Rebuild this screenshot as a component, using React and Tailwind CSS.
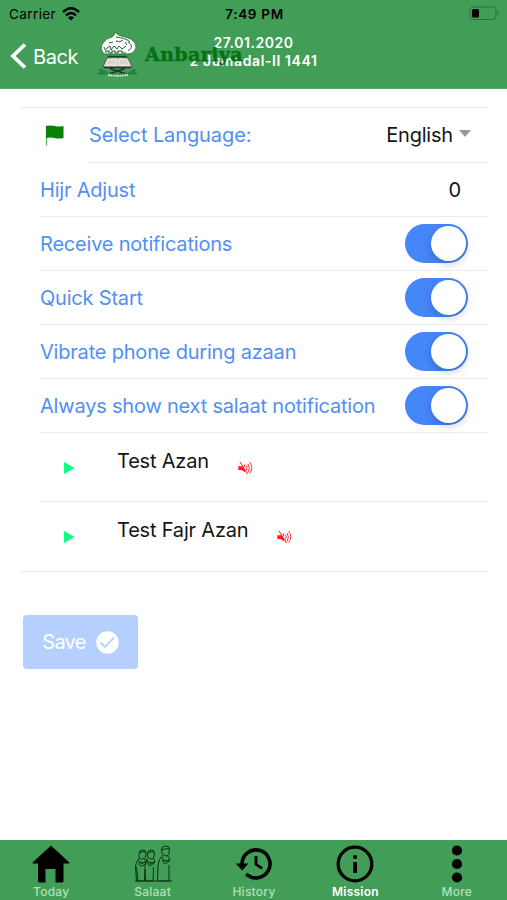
import React, { useState } from 'react';

const TABS = [
  { id: 'today', label: 'Today', icon: HomeIcon },
  { id: 'salaat', label: 'Salaat', icon: SalaatIcon },
  { id: 'history', label: 'History', icon: HistoryIcon },
  { id: 'mission', label: 'Mission', icon: InfoIcon },
  { id: 'more', label: 'More', icon: MoreIcon },
];

const SWITCHES = [
  { id: 'notifications', label: 'Receive notifications' },
  { id: 'quickStart', label: 'Quick Start' },
  { id: 'vibrate', label: 'Vibrate phone during azaan' },
  { id: 'nextSalaat', label: 'Always show next salaat notification' },
];

function HomeIcon() {
  return (
    <svg width="38" height="38" viewBox="0 0 38 38">
      <path d="M19 0.5 0.8 17.2q-.8 1.3.6 1.3H6V36q0 1.5 1.5 1.5h6V24h10v13.5h6.500q1.500 0 1.500-1.500V18.500h5q1.400 0 .6-1.300Z" />
    </svg>
  );
}

function SalaatIcon() {
  return (
    <svg width="38" height="38" viewBox="0 0 38 38" fill="none" stroke="#0b3315" strokeWidth="1">
      <path d="M1 36h37" />
      {/* two worshippers side by side */}
      <path d="M5 9q0-4 3.500-4t3.500 3l-.5 4q-1 2-3 2T5 12ZM5 8q3-2 7-1" />
      <path d="M5.500 13q-4 3-4 9l1 14h8l.5-12M5 15q-1 5 2 6.500l5-3q1-3-2-5M2.500 22l1.500 14" />
      <path d="M13.500 9q0-4 3.500-4t3.500 3l-.5 4q-1 2-3 2t-3-2ZM13.500 8q3-2 7-1" />
      <path d="M13.500 13q-2 3-2.500 8l.5 15H19l.5-14M13.500 15q0 4 2 6l5-3q1-3-2-5" />
      <path d="M6 17q2 2 5 0M15 17q2 2 5 0" strokeWidth="1.500" />
      {/* imam */}
      <path d="M27.500 5q0-4 4-4t4 3l-.5 5q-1 2-3 2t-4-3ZM27.500 5q4-2 8-1" />
      <path d="M28.500 10q-3.500 4-4.500 10l-.5 16H35V20M29 12q-1 6 2 7l4.500-3q1-4-3-6" />
      <path d="M29 15q3 2 6 0" strokeWidth="1.500" />
    </svg>
  );
}

function HistoryIcon() {
  return (
    <svg width="38" height="34" viewBox="0 0 38 34" fill="none" stroke="#000" strokeWidth="3.600" className="ml-px">
      <path d="M7 17a14 14 0 1 1 4.300 10" />
      <path d="M.8 16.500h12.600L7.200 23.500Z" fill="#000" stroke="none" />
      <path d="M21 9v8.300l6 4" strokeWidth="2.800" />
    </svg>
  );
}

function InfoIcon() {
  return (
    <svg width="38" height="38" viewBox="0 0 38 38">
      <circle cx="19" cy="19" r="16.800" fill="none" stroke="#000" strokeWidth="3.300" />
      <path d="M17.200 10.200h3.800v3.500h-3.800ZM17.200 17h3.800v11h-3.800Z" />
    </svg>
  );
}

function MoreIcon() {
  return (
    <svg width="38" height="38" viewBox="0 0 38 38">
      <circle cx="19" cy="5.500" r="5.100" />
      <circle cx="19" cy="19" r="5.100" />
      <circle cx="19" cy="32.500" r="5.100" />
    </svg>
  );
}

function Emblem() {
  return (
    <svg width="42" height="48" viewBox="0 0 42 48" className="shrink-0">
      {/* calligraphy dome */}
      <path d="M7 24Q2 18 6 13q3-5 9-6 3-2 3-5 3 4 10 5 12 3 11 11-2 6-9 6Z" fill="#fff" stroke="#1c7035" strokeWidth=".8" />
      <path d="M7 17q1 5 3 1l3-2 1 4 3-4 3 3 2-3 3 3 4-3M12 13l4-1M19 11q4 2 7-1M28 12l2 3M19 7q10 1 14 5M31 21q7-5 0-9" fill="none" stroke="#2d5c3d" strokeWidth="1" />
      <path d="M9 23v-2h3v2h3v-2h3v2h3v-2h4v2h4" fill="none" stroke="#16702f" strokeWidth="1.200" />
      <path d="M11 26.500h19" stroke="#0e4a20" strokeWidth="1.300" />
      {/* open book on its stand */}
      <path d="m10 28 10-.5 1 1 1-1 9 .5 4 9H6Z" fill="#e8e1da" stroke="#333" strokeWidth=".7" />
      <path d="M20.500 28.500v8M11 31h7M10 33h8M23 31h7M23 33h8" stroke="#c1b8b0" strokeWidth=".7" />
      <path d="M7 37.500h27M13 38.500l15 5M28 38.500l-15 5" stroke="#27302a" strokeWidth="1.400" />
      <path d="m2 39 2 3-3 2 10-.5M39 39l-2 3 3 2-10-.5" fill="#218b42" stroke="#186c32" strokeWidth=".7" />
      <path d="M4 39q5 5 17 5t16-5l-4 5q-12 4-25 0Z" fill="#35924d" stroke="#176f32" strokeWidth=".6" />
      <path d="M11 45q10 1.500 20 0" stroke="#d5edd8" strokeWidth="1.800" strokeDasharray="1.800 .5" fill="none" />
    </svg>
  );
}

function StatusBar() {
  return (
    <div className="grid h-7 grid-cols-3 items-center pl-[9px] pr-[7px] text-[13.500px] text-black">
      <div className="flex items-center gap-[6px]">
        <span className="tracking-[0.4px]">Carrier</span>
        <svg width="18" height="14" viewBox="0 0 18 14" fill="none" stroke="#000" strokeWidth="2.400">
          <path d="M1 5q8-7.500 16 0M4 8.300q5-4.800 10 0" />
          <path d="M6 10.600q3-2.500 6 0L9 13.500Z" fill="#000" stroke="none" />
        </svg>
      </div>
      <span className="whitespace-nowrap text-center font-semibold tracking-[0.7px]">7:49 PM</span>
      <svg width="31" height="15" viewBox="0 0 31 15" className="-mt-[2px] justify-self-end">
        <rect x="1" y="1" width="26" height="12.500" rx="3.500" fill="none" stroke="#247237" />
        <rect x="3" y="3" width="7" height="8.500" rx="1.500" />
        <path d="M28.500 5q2.500 2 0 4.500Z" fill="#247237" />
      </svg>
    </div>
  );
}

function Header() {
  return (
    <header className="relative h-[89px] border-b border-[#55a269] bg-[#429e57]">
      <StatusBar />
      <div className="flex h-14 items-center pl-[10px]">
        <button className="flex w-[71px] items-center gap-[6px] text-[20px] tracking-[-0.4px] text-white">
          <svg width="17" height="26" viewBox="0 0 17 26" fill="none" stroke="#fff" strokeWidth="3.800" className="shrink-0">
            <path d="M15 1.500 3 13l12 11.500" />
          </svg>
          <span className="mt-0.5">Back</span>
        </button>
        <div className="-mt-[5px] ml-4">
          <Emblem />
        </div>
      </div>
      {/* the date is centred on the bar, the brand name runs over it */}
      <div className="absolute inset-x-0 top-[34px] text-center text-[14px] font-semibold leading-[18px] tracking-[0.55px] text-white">
        <p>27.01.2020</p>
        <p className="tracking-[0.6px]">2 Jumadal-II 1441</p>
      </div>
      <span className="absolute left-[145px] top-[42px] font-['DejaVu_Serif',serif] text-[19px] font-bold leading-6 tracking-[0.4px] text-[#067016] [-webkit-text-stroke:0.5px_#067016]">
        Anbariya
      </span>
    </header>
  );
}

function Toggle({ checked, onChange, label }) {
  return (
    <button
      role="switch"
      aria-checked={checked}
      aria-label={label}
      onClick={onChange}
      className={`mr-5 flex h-[39px] w-[63px] items-center rounded-full p-0.5 ${
        checked ? 'justify-end bg-[#4586f8]' : 'justify-start bg-gray-200'
      }`}
    >
      <span className="size-[35px] rounded-full bg-white shadow-[0_3px_8px_rgba(0,0,0,0.2)]" />
    </button>
  );
}

function MutedIcon() {
  return (
    <svg width="15" height="14" viewBox="0 0 15 14" fill="none" stroke="#ff1b22" strokeWidth="1">
      <path d="M.3 5.200h3.200l3.500-2v8L3.500 9H.3Z" fill="#ff1b22" stroke="none" />
      <path d="m2.500.5 8 13" stroke="#fff" strokeWidth="1.300" />
      <path d="m2 1 7.500 12" />
      <path d="M8.300 4.500q1.700 2.500 0 5M10 3q2.800 4 0 8.500M11.500 1.200q4.500 5 .2 11.300" strokeWidth=".9" />
    </svg>
  );
}

function AzanRow({ label, last }) {
  return (
    <div className={`flex h-[69px] ${last ? '' : 'ml-[19px] border-b border-[#ececec]'}`}>
      <button aria-label={`Play ${label}`} className={`mt-7 h-[14px] ${last ? 'ml-[43px]' : 'ml-6'}`}>
        <svg width="11" height="14" viewBox="0 0 11 14">
          <path d="M0 1v12l10.500-6Z" fill="#08ff83" />
        </svg>
      </button>
      <span className="ml-[42px] mt-[14px] leading-7">{label}</span>
      <span className="ml-[29px] mt-7">
        <MutedIcon />
      </span>
    </div>
  );
}

export default function App() {
  const [settings, setSettings] = useState({
    notifications: true,
    quickStart: true,
    vibrate: true,
    nextSalaat: true,
  });
  const [activeTab, setActiveTab] = useState('mission');

  const toggle = (id) => {
    setSettings((prev) => ({ ...prev, [id]: !prev[id] }));
  };

  return (
    <div className="flex h-screen flex-col bg-white font-['Inter',sans-serif]">
      <Header />

      <main className="flex-1 pl-[21px] pr-[19px] pt-[18px] text-[20px] tracking-[-0.2px]">
        <section className="border-y border-[#ececec] text-[#151515]">
          <div className="flex h-[55px]">
            <div className="w-[68px] pl-6 pt-4">
              <svg width="20" height="23" viewBox="0 0 20 23">
                <path d="M1.500 1.500v20" stroke="#5aab60" strokeWidth="1.300" />
                <path d="M1 2q5-1 9 0t8.500 0v12q-5 1-9 0T1 14Z" fill="#078207" />
              </svg>
            </div>
            <div className="flex flex-1 items-center justify-between border-b border-[#ececec]">
              <span className="tracking-[-0.1px] text-[#528ff5]">Select Language:</span>
              <span className="mr-[17px] flex items-center gap-[6px]">
                English
                <svg width="12" height="7" viewBox="0 0 12 7" className="-mt-1">
                  <path d="M0 0h12L6 7Z" fill="#999" />
                </svg>
              </span>
            </div>
          </div>

          <div className="ml-[19px] flex h-[54px] items-center justify-between border-b border-[#ececec]">
            <span className="text-[#528ff5]">Hijr Adjust</span>
            <span className="mr-[27px]">0</span>
          </div>

          {SWITCHES.map((item) => (
            <div
              key={item.id}
              className="ml-[19px] flex h-[54px] items-center justify-between border-b border-[#ececec]"
            >
              <span className="whitespace-nowrap text-[#528ff5]">{item.label}</span>
              <Toggle checked={settings[item.id]} onChange={() => toggle(item.id)} label={item.label} />
            </div>
          ))}

          <AzanRow label="Test Azan" />
          <AzanRow label="Test Fajr Azan" last />
        </section>

        <button className="ml-0.5 mt-[43px] flex h-[54px] w-[115px] items-center justify-center gap-[10px] rounded bg-[#b5cfff] tracking-[-0.7px] text-white">
          Save
          <svg width="23" height="23" viewBox="0 0 23 23">
            <circle cx="11.500" cy="11.500" r="11.200" fill="#fff" />
            <path d="m4.500 11.500 4.500 4.500 9-9.500" fill="none" stroke="#b5cfff" strokeWidth="1.800" />
          </svg>
        </button>
      </main>

      <nav className="grid h-[60px] grid-cols-5 bg-[#429e57]">
        {TABS.map(({ id, label, icon: Icon }) => (
          <button
            key={id}
            onClick={() => setActiveTab(id)}
            className={`flex flex-col items-center pl-px pt-1 text-[12px] leading-[17px] tracking-[0.25px] ${
              activeTab === id ? 'font-semibold text-white' : 'font-medium text-[#b2e1b7]'
            }`}
          >
            <span className="flex h-[39px] items-center">
              <Icon />
            </span>
            {label}
          </button>
        ))}
      </nav>
    </div>
  );
}
